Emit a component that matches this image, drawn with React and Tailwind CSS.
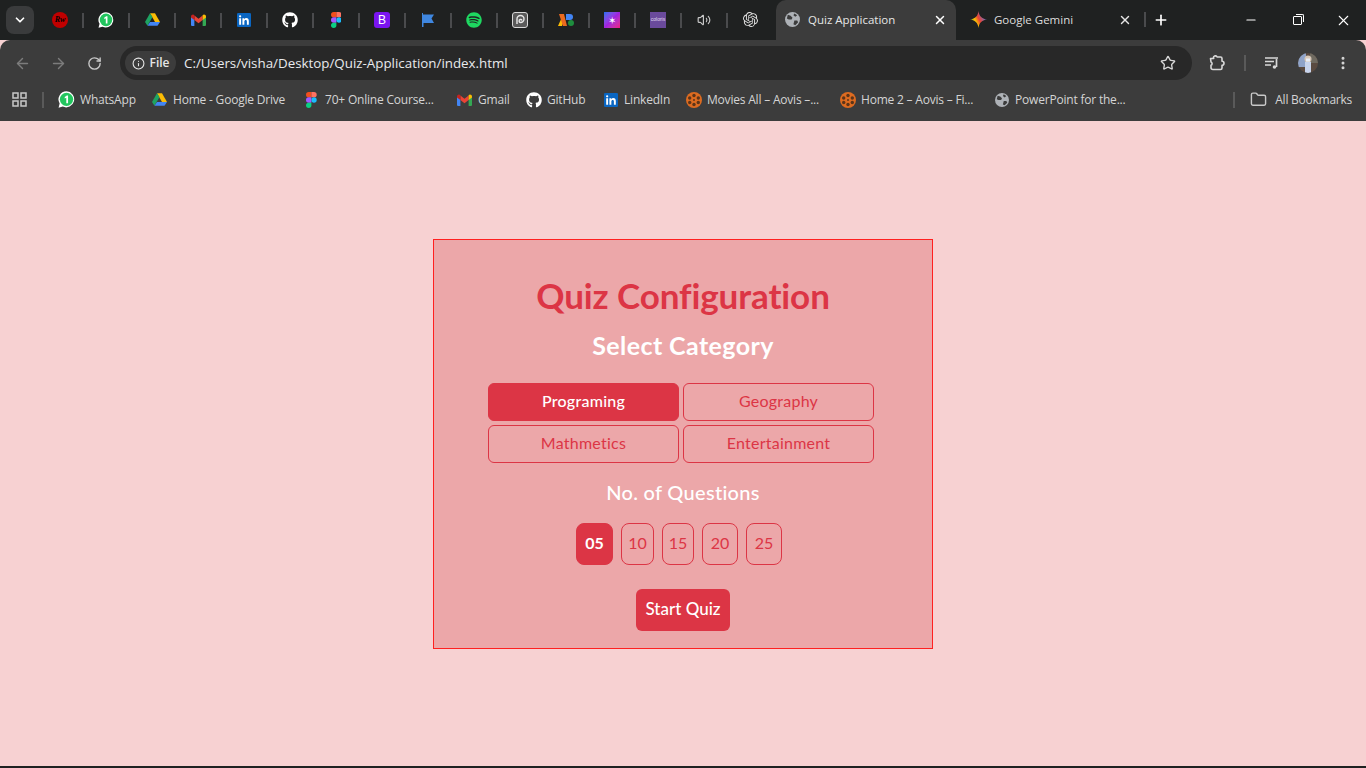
import React from "react";
import { FaGithub, FaSpotify } from "react-icons/fa";
import { SiOpenai } from "react-icons/si";
import { LuChevronDown, LuX, LuPlus, LuMinus, LuArrowLeft, LuArrowRight, LuRotateCw, LuInfo, LuStar, LuEllipsisVertical, LuFolder, LuVolume2 } from "react-icons/lu";

const Drive = ({ s = 16 }) => (
  <svg width={s} height={s} viewBox="0 0 24 22">
    <path d="M8 1h8l8 14h-8z" fill="#fbbc04" />
    <path d="M8 1L0 15l4 6 8-14z" fill="#1ea362" />
    <path d="M4 21h16l4-6H8z" fill="#4285f4" />
  </svg>
);
const Gmail = ({ s = 16 }) => (
  <svg width={s} height={s * 0.8} viewBox="0 0 20 16">
    <path d="M0 3v11.5A1.5 1.5 0 0 0 1.500 16H4.500V7z" fill="#4285f4" />
    <path d="M20 3v11.500A1.500 1.500 0 0 1 18.500 16H15.500V7z" fill="#34a853" />
    <path d="M4.500 8V2L10 6.200 15.500 2V8L10 12.200z" fill="#ea4335" />
    <path d="M0 3.500C0 1 2.800 0 4.500 1.500V8L0 4.600z" fill="#c5221f" />
    <path d="M20 3.500C20 1 17.200 0 15.500 1.500V8L20 4.600z" fill="#fbbc04" />
  </svg>
);
const Figma = ({ s = 16 }) => (
  <svg width={s * 0.67} height={s} viewBox="0 0 16 24">
    <path d="M8 0H4a4 4 0 0 0 0 8h4z" fill="#f24e1e" />
    <path d="M8 0h4a4 4 0 0 1 0 8H8z" fill="#ff7262" />
    <path d="M8 8H4a4 4 0 0 0 0 8h4z" fill="#a259ff" />
    <circle cx="12" cy="12" r="4" fill="#1abcfe" />
    <path d="M8 16H4a4 4 0 1 0 4 4z" fill="#0acf83" />
  </svg>
);
const WhatsApp = ({ s = 16 }) => (
  <svg width={s} height={s} viewBox="0 0 24 24">
    <path d="M12 0.500a11.300 11.300 0 0 0-9.700 17.100L0.800 23.500l5.900-1.500A11.300 11.300 0 1 0 12 0.500z" fill="#fff" />
    <circle cx="12" cy="11.800" r="9.400" fill="#22c55e" />
    <path d="M9.500 8.300l3-1.800h1.700V17.200h-2.500V9.500l-2.200 1.200z" fill="#fff" />
  </svg>
);
const LinkedIn = ({ s = 16 }) => (
  <svg width={s} height={s} viewBox="0 0 16 16">
    <rect width="16" height="16" rx="1.500" fill="#0a66c2" />
    <path d="M2.500 6h2.200v7.500H2.500zM3.600 2.500a1.300 1.300 0 1 1 0 2.600 1.300 1.300 0 0 1 0-2.600zM6.200 6h2.100v1c.5-.8 1.300-1.200 2.300-1.200 2 0 2.900 1.200 2.900 3.300v4.400h-2.200V9.600c0-1-.4-1.700-1.300-1.700-1 0-1.600.7-1.600 1.800v3.800H6.200z" fill="#fff" />
  </svg>
);
const Reel = ({ s = 16 }) => (
  <svg width={s} height={s} viewBox="0 0 16 16">
    <circle cx="8" cy="8" r="8" fill="#dd6b20" />
    {[[8, 3.500], [8, 12.500], [3.700, 6], [12.300, 6], [3.700, 10.500], [12.300, 10.500]].map(([x, y], i) => (
      <circle key={i} cx={x} cy={y} r="1.700" fill="#5c3418" />
    ))}
    <circle cx="8" cy="8" r="1" fill="#5c3418" />
  </svg>
);
const Globe = ({ s = 16 }) => (
  <svg width={s} height={s} viewBox="0 0 16 16">
    <circle cx="8" cy="8" r="8" fill="#aeb2b7" />
    <path d="M3 3l3 1 2 2-1 2-3 0-2-1zM10 9l3 0 1 2-3 3-2-1zM10 1.500l3 2-2 1.500-2-1.500z" fill="#3c3c3c" />
  </svg>
);
const Gemini = ({ s = 17 }) => (
  <svg width={s} height={s} viewBox="0 0 16 16">
    <defs>
      <linearGradient id="gem" x1="0" y1="0.800" x2="1" y2="0.300">
        <stop offset="0" stopColor="#34a853" />
        <stop offset="0.350" stopColor="#fbbc04" />
        <stop offset="0.550" stopColor="#ea4335" />
        <stop offset="1" stopColor="#4285f4" />
      </linearGradient>
    </defs>
    <path d="M8 0C8.500 4.500 11 7.500 16 8 11 8.500 8.500 11.500 8 16 7.500 11.500 5 8.500 0 8 5 7.500 7.500 4.500 8 0z" fill="url(#gem)" />
  </svg>
);
const Puzzle = () => (
  <svg width="17" height="17" viewBox="0 0 17 17" fill="none" stroke="#d8d8d8" strokeWidth="1.600" strokeLinejoin="round">
    <path d="M1.500 3.500h3.200a1.800 1.800 0 0 1 3.400-1.500h3.400a1.500 1.500 0 0 1 1.500 1.500v2.800a1.800 1.800 0 0 1 0 4v2.700a1.500 1.500 0 0 1-1.500 1.500H4a2 2 0 0 1-2-2v-2.200a1.800 1.800 0 0 0 0-3.300z" />
  </svg>
);
const AppsGrid = () => (
  <svg width="15" height="15" viewBox="0 0 15 15" fill="none" stroke="#c8c8c8" strokeWidth="1.500">
    <rect x="1" y="1" width="5" height="5" /><rect x="9" y="1" width="5" height="5" />
    <rect x="1" y="9" width="5" height="5" /><rect x="9" y="9" width="5" height="5" />
  </svg>
);
const Queue = () => (
  <svg width="16" height="14" viewBox="0 0 16 14" fill="none" stroke="#d8d8d8" strokeWidth="1.500">
    <path d="M1 2h13M1 5.500h9M1 9h6" />
    <path d="M12.500 11V3" strokeWidth="1.700" />
    <circle cx="10.500" cy="11" r="1.800" fill="#d8d8d8" stroke="none" />
  </svg>
);
const Avatar = () => (
  <svg width="20" height="20" viewBox="0 0 20 20" className="rounded-full">
    <rect width="20" height="20" fill="#5a4a40" />
    <rect width="8" height="14" fill="#8fa3c8" />
    <rect x="12" width="8" height="10" fill="#6f6a60" />
    <circle cx="10" cy="6" r="3.500" fill="#d8c8b8" />
    <rect x="7" y="9" width="6" height="11" fill="#c8d4ec" />
    <rect x="8" y="5.500" width="4" height="3" fill="#e8eef8" />
  </svg>
);

const pinned = [
  <span className="flex h-4 w-4 items-center justify-center rounded-full bg-[#c00000] font-['Liberation_Serif',serif] text-[8px] font-bold italic leading-none text-black">Rw</span>,
  <WhatsApp />,
  <Drive s={15} />,
  <Gmail s={15} />,
  <LinkedIn s={14} />,
  <FaGithub className="text-[16px] text-white" />,
  <Figma s={16} />,
  <span className="flex h-4 w-4 items-center justify-center rounded-[3px] bg-[#7a14f0] font-['Liberation_Sans',sans-serif] text-[12px] leading-none text-white">B</span>,
  <svg width="14" height="14" viewBox="0 0 14 14"><path d="M1 0h1v1.500h11l-2.500 4 2.500 4.500H2.500V14H1z" fill="#3f87e0" /></svg>,
  <FaSpotify className="text-[16px] text-[#1ed760]" />,
  <span className="flex h-4 w-4 items-center justify-center rounded-[3px] border border-[#d8d8d8] bg-[#5a5a5a]"><svg width="10" height="11" viewBox="0 0 10 11" fill="none" stroke="#e8e8e8" strokeWidth="1.400"><path d="M2 10V5a3.500 3.500 0 1 1 3.500 3.500A1.500 1.500 0 1 1 7 6.500" /></svg></span>,
  <svg width="16" height="12" viewBox="0 0 16 12"><path d="M0 12L4 3l2 3-2 6z" fill="#fbbc04" /><path d="M1 0h5l3 12H5z" fill="#ea6a1f" /><path d="M8 0h4a3 3 0 0 1 0 6H8z" fill="#4285f4" /><circle cx="13" cy="9" r="3" fill="#1e8e3e" /></svg>,
  <span className="flex h-4 w-4 items-center justify-center bg-gradient-to-br from-[#0a6cf0] via-[#a020e0] to-[#f01080] text-[10px] leading-none text-white">✶</span>,
  <span className="flex h-4 w-4 items-center justify-center bg-[#6a4a9c] font-['Liberation_Sans',sans-serif] text-[5px] leading-none text-[#e0d8f0]">coloris</span>,
  <LuVolume2 className="text-[14px] text-[#c8c8c8]" />,
  <SiOpenai className="text-[15px] text-[#e0e0e0]" />,
];

const bookmarks = [
  [<WhatsApp s={17} />, "WhatsApp", "w-[93px]"],
  [<Drive s={15} />, "Home - Google Drive", "w-[152px]"],
  [<Figma s={16} />, "70+ Online Course...", "w-[153px]"],
  [<Gmail s={15} />, "Gmail", "w-[69px]"],
  [<FaGithub className="text-[16px] text-white" />, "GitHub", "w-[77px]"],
  [<LinkedIn s={14} />, "LinkedIn", "w-[83px]"],
  [<Reel />, "Movies All – Aovis –...", "w-[154px]"],
  [<Reel />, "Home 2 – Aovis – Fi...", "w-[154px]"],
  [<Globe s={14} />, "PowerPoint for the...", "w-[140px]"],
];

const cats = ["Programing", "Geography", "Mathmetics", "Entertainment"];
const nums = [["05", "w-[37px]"], ["10", "w-[33px]"], ["15", "w-[32px]"], ["20", "w-[36px]"], ["25", "w-[36px]"]];

export default function App() {
  return (
    <div className="flex h-screen flex-col bg-[#f7d1d2] font-['Lato',sans-serif]">
      {/* tab strip */}
      <div className="flex h-10 shrink-0 items-center bg-[#1f2121] pl-[6px] font-['Open_Sans',sans-serif] text-[11.500px] text-[#dedede]">
        <div className="flex h-[28px] w-[28px] items-center justify-center rounded-lg bg-[#3a3b3c] text-white"><LuChevronDown className="text-[14px]" strokeWidth={3} /></div>
        <div className="ml-[3px] flex">
          {pinned.map((icon, i) => (
            <div key={i} className="relative flex h-10 w-[46px] items-center justify-center pb-px">
              {icon}
              {i < 15 && <span className="absolute -right-px top-[13px] h-[15px] w-[2px] bg-[#4a4b4d]" />}
            </div>
          ))}
        </div>
        <div className="ml-[3px] flex h-10 w-[180px] items-center rounded-t-[10px] bg-[#3c3c3c] pl-[9px] pr-[9px] pb-px">
          <Globe s={15} />
          <span className="ml-[8px] grow text-[#e6e6e6]">Quiz Application</span>
          <LuX className="text-[14px] text-white" strokeWidth={2.500} />
        </div>
        <div className="flex h-10 w-[190px] items-center pl-[14px] pb-px">
          <Gemini />
          <span className="ml-[7px] grow">Google Gemini</span>
          <LuX className="text-[14px] text-[#e6e6e6]" strokeWidth={2.500} />
          <span className="ml-[12px] h-[15px] w-[2px] bg-[#4a4b4d]" />
        </div>
        <LuPlus className="ml-[7px] text-[16px] text-white" strokeWidth={2.500} />
        <div className="ml-auto flex items-center text-white">
          <div className="flex h-10 w-[46px] items-center justify-center"><LuMinus className="text-[14px]" /></div>
          <div className="flex h-10 w-[46px] items-center justify-center">
            <span className="relative block h-[9px] w-[9px] rounded-[1px] border border-white">
              <span className="absolute -right-[3px] -top-[3px] h-[8px] w-[8px] rounded-tr-[2px] border-r border-t border-white" />
            </span>
          </div>
          <div className="flex h-10 w-[46px] items-center justify-center"><LuX className="text-[17px]" strokeWidth={1.500} /></div>
        </div>
      </div>
      {/* toolbar */}
      <div className="flex h-10 shrink-0 items-center rounded-t-[10px] bg-[#3c3c3c] pl-[14px] pr-[13px] pt-[6px]">
        <LuArrowLeft className="text-[17px] text-[#7c7c7c]" strokeWidth={2} />
        <LuArrowRight className="ml-[19px] text-[17px] text-[#7c7c7c]" strokeWidth={2} />
        <LuRotateCw className="ml-[20px] text-[15px] text-[#c8c8c8]" strokeWidth={2.200} />
        <div className="ml-[18px] flex h-[34px] w-[1072px] items-center rounded-full bg-[#282828] pl-[5px] pr-[16px] font-['Open_Sans',sans-serif] text-[13.350px]">
          <div className="flex h-[24px] w-[51px] items-center justify-center gap-[5px] rounded-full bg-[#3c3c3c] text-[12px] font-semibold text-[#e6e6e6]">
            <LuInfo className="text-[13px]" />File
          </div>
          <span className="ml-[8px] grow text-[#e8eaed]">C:/Users/visha/Desktop/Quiz-Application/index.html</span>
          <LuStar className="text-[16px] text-[#d8d8d8]" strokeWidth={2} />
        </div>
        <span className="ml-[17px]"><Puzzle /></span>
        <span className="ml-[18px] h-[16px] w-[2px] bg-[#5a5a5a]" />
        <span className="ml-[18px]"><Queue /></span>
        <span className="ml-[18px]"><Avatar /></span>
        <LuEllipsisVertical className="ml-[17px] text-[16px] text-[#d8d8d8]" strokeWidth={2.500} />
      </div>
      {/* bookmarks bar */}
      <div className="flex h-[41px] shrink-0 items-center bg-[#3c3c3c] pb-[2px] pl-[12px] pr-[14px] font-['Open_Sans',sans-serif] text-[12px] text-[#d4d4d4]">
        <AppsGrid />
        <span className="ml-[15px] mr-[14px] h-[16px] w-[2px] bg-[#5a5a5a]" />
        {bookmarks.map(([icon, label, w], i) => (
          <div key={i} className={`flex items-center gap-[5px] ${w}`}>
            <span className="flex w-[17px] justify-center">{icon}</span>
            <span className="whitespace-nowrap tracking-[-0.2px]">{label}</span>
          </div>
        ))}
        <span className="ml-auto h-[16px] w-[2px] bg-[#5a5a5a]" />
        <LuFolder className="ml-[15px] text-[17px] text-[#c8c8c8]" />
        <span className="ml-[8px] tracking-[-0.25px]">All Bookmarks</span>
      </div>
      {/* page */}
      <div className="flex grow items-center justify-center border-b-2 border-[#1f2121]">
        <div className="flex h-[410px] w-[500px] flex-col items-center border border-[#ff2020] bg-[#eca7a9] pt-[33px]">
          <h1 className="h-[44px] text-[35px] font-bold leading-[44px] tracking-[-0.1px] text-[#dc3545]">Quiz Configuration</h1>
          <h2 className="mt-[8px] h-[40px] text-[25px] font-bold leading-[40px] tracking-[0.4px] text-white">Select Category</h2>
          <div className="mr-[4px] mt-[18px] grid w-[386px] grid-cols-2 gap-1">
            {cats.map((c, i) => (
              <button key={c} className={`h-[38px] rounded-md border border-[#dc3545] pb-px text-[16px] leading-none tracking-[0.25px] ${i === 0 ? "bg-[#dc3545] font-medium text-white" : "text-[#dc3545]"}`}>{c}</button>
            ))}
          </div>
          <h3 className="mt-[15px] h-[28px] text-[20px] font-medium leading-[28px] tracking-[0.3px] text-white">No. of Questions</h3>
          <div className="mr-[8px] mt-[17px] flex gap-2">
            {nums.map(([n, w], i) => (
              <button key={n} className={`h-[42px] ${w} rounded-lg border border-[#dc3545] pb-px text-[16px] leading-none ${i === 0 ? "bg-[#dc3545] font-bold text-white" : "text-[#dc3545]"}`}>{n}</button>
            ))}
          </div>
          <button className="mt-[24px] h-[42px] w-[94px] rounded-md bg-[#dc3545] pb-[2px] text-[17px] font-medium leading-none text-white">Start Quiz</button>
        </div>
      </div>
    </div>
  );
}
